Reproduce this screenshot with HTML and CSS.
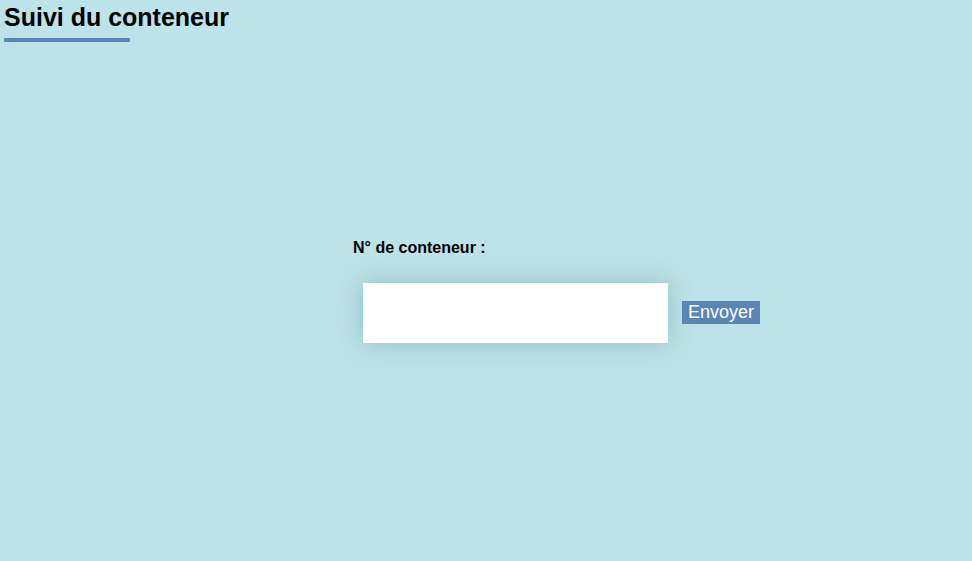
FILE: index.html
```html
<!DOCTYPE html>
<html lang="fr">
<head>
<meta charset="utf-8">
<title>Suivi du conteneur</title>
<link rel="stylesheet" href="styles.css">
</head>
<body>
<header class="header">
  <h1 class="title">Suivi du conteneur</h1>
  <div class="title-bar"></div>
</header>
<main class="main">
  <form class="form" onsubmit="return false;">
    <label class="label" for="num">N° de conteneur :</label>
    <div class="row">
      <input class="input" id="num" type="text">
      <button class="btn" type="submit">Envoyer</button>
    </div>
  </form>
</main>
</body>
</html>
```
FILE: styles.css
```css
html, body {
  margin: 0;
  padding: 0;
  height: 100%;
}
body {
  background: #bce3e7;
  font-family: "Liberation Sans", Arial, sans-serif;
  color: #000;
}
.header {
  padding: 3px 4px 0;
}
.title {
  margin: 0;
  font-size: 25px;
  line-height: 28px;
  font-weight: bold;
}
.title-bar {
  width: 126px;
  height: 4px;
  margin-top: 7px;
  background: #5a87b5;
}
.main {
  padding-top: 197px;
}
.form {
  width: 266px;
  margin: 0 auto;
}
.label {
  display: block;
  font-size: 16px;
  line-height: 18px;
  font-weight: bold;
}
.row {
  display: flex;
  align-items: center;
  margin-top: 26px;
  margin-left: 10px;
  width: max-content;
}
.input {
  width: 305px;
  height: 60px;
  box-sizing: border-box;
  border: none;
  background: #fff;
  box-shadow: 0 0 26px rgba(70, 120, 130, 0.35);
  outline: none;
  font-size: 16px;
  padding: 0 8px;
}
.btn {
  margin-left: 14px;
  border: none;
  background: #5a86b5;
  color: #fff;
  font-family: "Liberation Sans", Arial, sans-serif;
  font-size: 18px;
  line-height: 21px;
  padding: 1px 6px 1px;
  margin-top: -1px;
  cursor: pointer;
}
```
